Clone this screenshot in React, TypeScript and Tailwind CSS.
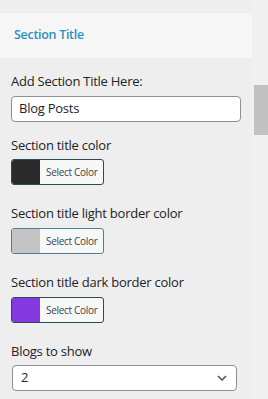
import React from 'react';

const font = { fontFamily: '"Open Sans", "Noto Sans", sans-serif' };

function ColorPicker({ swatch, border }: { swatch: string; border: string }) {
  return (
    <div className={`flex h-[26px] w-[93px] overflow-hidden rounded-[3px] border ${border} bg-[#f6f7f7]`}>
      <div className={`w-[28px] shrink-0 ${swatch}`} />
      <span className="flex flex-1 items-center pl-[6px] text-[10px] tracking-[-0.3px] text-[#3c434a]">Select Color</span>
    </div>
  );
}

export default function App() {
  return (
    <div className="flex h-[399px] w-[268px] overflow-hidden bg-[#f0f0f1]" style={font}>
      <div className="flex w-[252px] flex-col bg-[#eeeeee] pt-[13px]">
        <div className="flex h-[45px] items-center bg-[#f6f6f6] pl-[14px]">
          <h3 className="text-[12.5px] font-semibold tracking-[-0.3px] text-[#2e8fc2]">Section Title</h3>
        </div>

        <div className="flex flex-col px-[11px] tracking-[-0.25px] text-[#1d2327]">
          <label className="mt-[14px] text-[13px] leading-[18px]">Add Section Title Here:</label>
          <div className="mt-[6px] flex h-[26px] w-[230px] items-center rounded-[4px] border border-[#8c8f94] bg-white px-[7px] text-[13px]">
            Blog Posts
          </div>

          <label className="mt-[14px] text-[13px] leading-[18px]">Section title color</label>
          <div className="mt-[5px]">
            <ColorPicker swatch="bg-[#2a2a2a]" border="border-[#2a4a5a]" />
          </div>

          <label className="mt-[19px] text-[13px] leading-[18px]">Section title light border color</label>
          <div className="mt-[6px]">
            <ColorPicker swatch="bg-[#c4c4c4]" border="border-[#4f7d96]" />
          </div>

          <label className="mt-[19px] text-[13px] leading-[18px]">Section title dark border color</label>
          <div className="mt-[6px]">
            <ColorPicker swatch="bg-[#8338e0]" border="border-[#2a4a5a]" />
          </div>

          <label className="mt-[19px] text-[13px] leading-[18px]">Blogs to show</label>
          <div className="ml-px mt-[5px] flex h-[26px] w-[225px] items-center justify-between rounded-[4px] border border-[#8c8f94] bg-white pl-[8px] pr-[9px] text-[13px]">
            <span>2</span>
            <svg width="10" height="6" viewBox="0 0 10 6" fill="none">
              <path d="M1 1l4 4 4-4" stroke="#50575e" strokeWidth="1.6" />
            </svg>
          </div>
        </div>
      </div>

      <div className="flex flex-1 flex-col pl-[2px] pt-[85px]">
        <div className="h-[50px] w-full bg-[#c1c1c1]" />
      </div>
    </div>
  );
}
